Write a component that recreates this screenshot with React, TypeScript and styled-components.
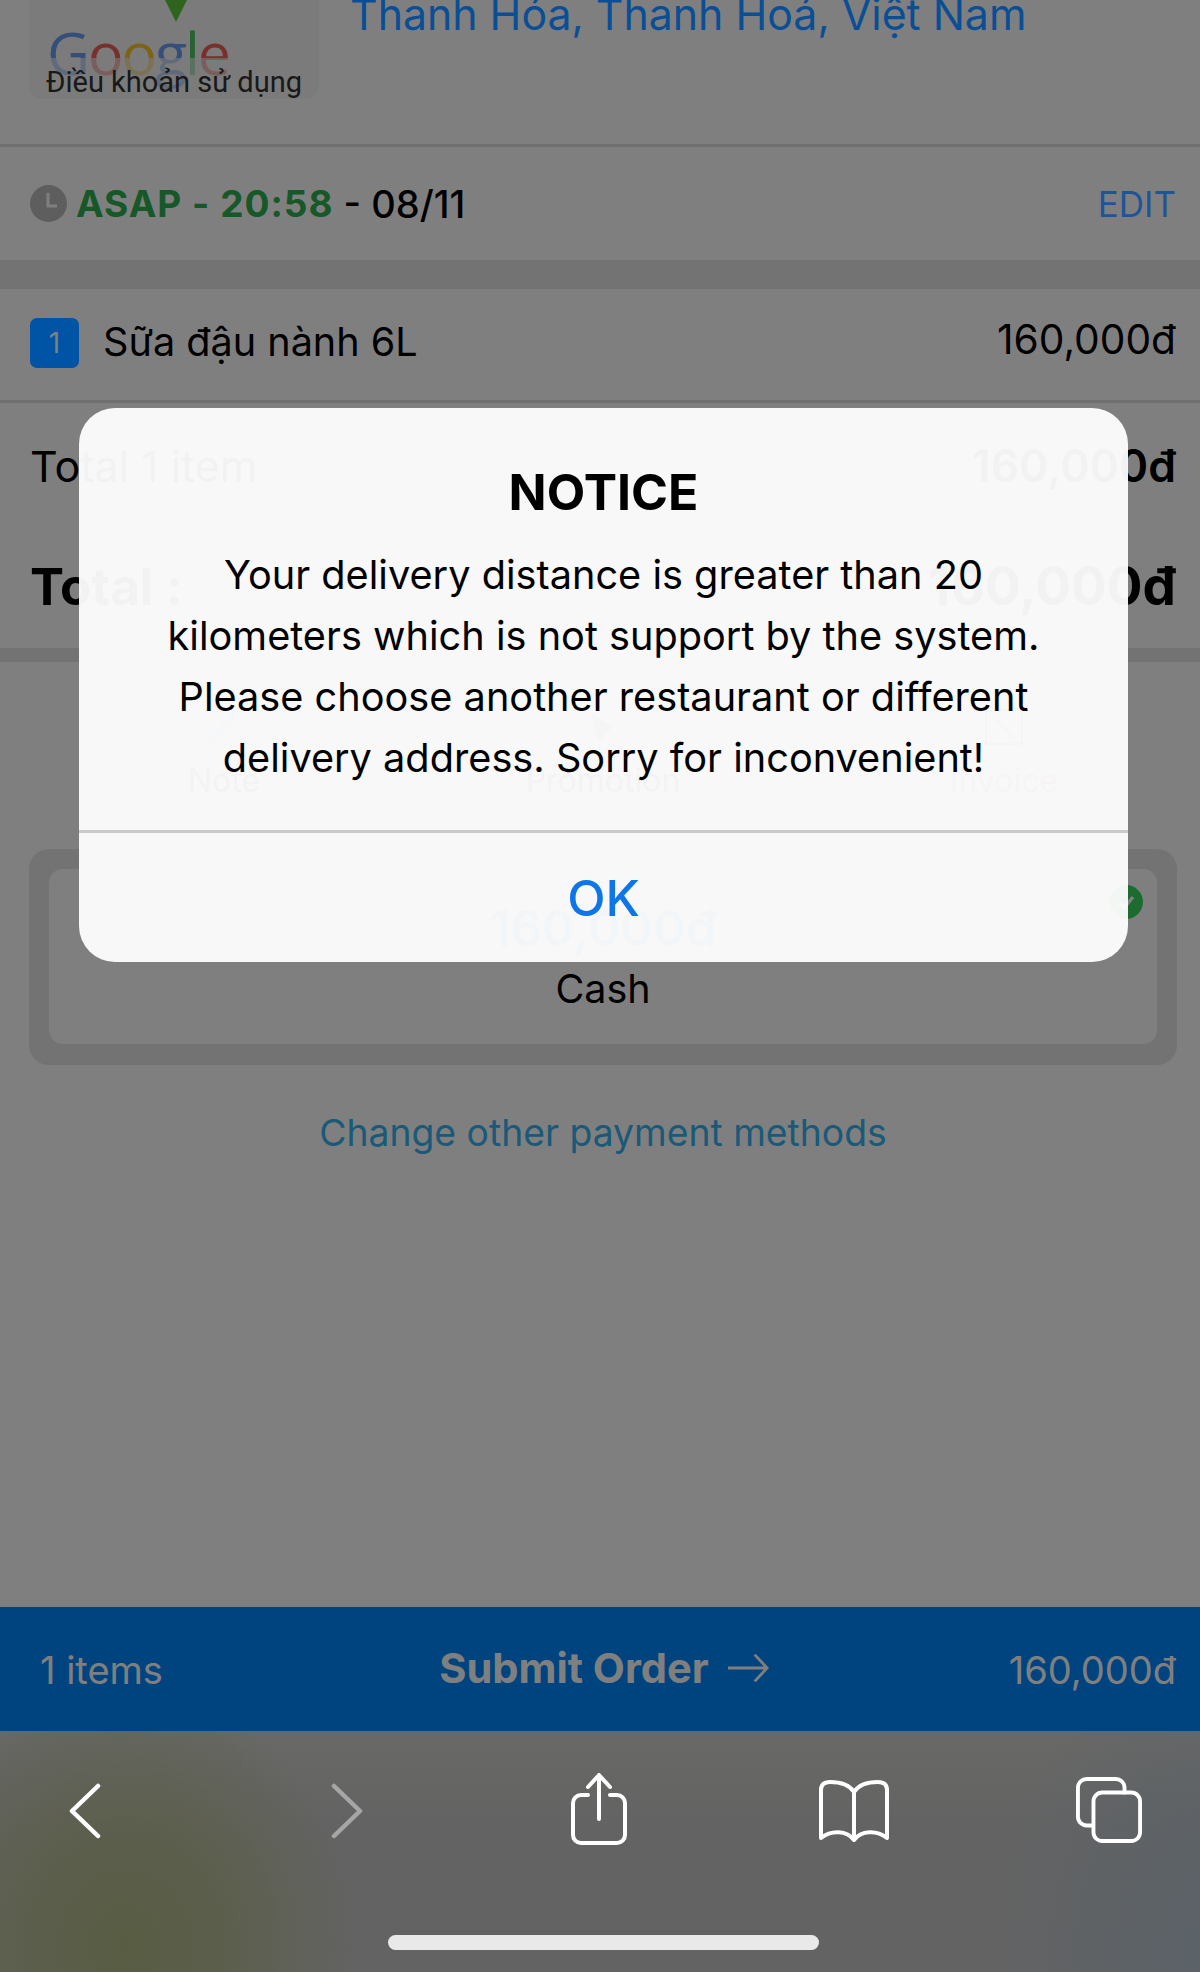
import React from "react";
import styled, { createGlobalStyle } from "styled-components";

const Global = createGlobalStyle`
  html, body { margin: 0; padding: 0; background: #fff; }
  body { font-family: Inter, "Noto Sans", "Liberation Sans", sans-serif; color: #000; }
  * { box-sizing: border-box; }
`;

const Screen = styled.div`
  width: 1200px;
  height: 1972px;
  display: flex;
  flex-direction: column;
  overflow: hidden;
`;
const Dimmed = styled.div`
  position: relative;
  height: 1731px;
  display: flex;
  flex-direction: column;
  background: #fff;
`;
const Scroll = styled.div`
  flex: 1;
  display: flex;
  flex-direction: column;
  min-height: 0;
`;
const MapRow = styled.div`
  height: 147px;
  flex: none;
  display: flex;
  gap: 31px;
  padding: 0 30px 0 29px;
  border-bottom: 3px solid #dedede;
  overflow: hidden;
`;
const MapCard = styled.div`
  position: relative;
  width: 290px;
  height: 99px;
  flex: none;
  background: #f6f6f6;
  border-radius: 0 0 14px 14px;
  overflow: hidden;
`;
const Pin = styled.svg`
  position: absolute;
  left: 135px;
  top: 0;
`;
const GoogleMark = styled.div`
  position: absolute;
  left: 18px;
  top: 18px;
  font-family: "Open Sans", sans-serif;
  font-size: 59px;
  line-height: 68px;
  letter-spacing: -2px;
  white-space: nowrap;
`;
const Letter = styled.span<{ $c: string }>`
  color: ${(p) => p.$c};
`;
const TermsStrip = styled.div`
  position: absolute;
  left: 0;
  right: 0;
  bottom: 0;
  height: 41px;
  padding: 7px 0 0 17px;
  background: rgba(246, 246, 246, 0.62);
  font-family: Roboto, sans-serif;
  font-size: 29px;
  line-height: 34px;
  color: #333;
  white-space: nowrap;
`;
const Address = styled.div`
  position: relative;
  z-index: 2;
  margin-top: -10px;
  font-size: 42.8px;
  line-height: 50px;
  color: #0a4f95;
  white-space: nowrap;
`;
const TimeRow = styled.div`
  height: 113px;
  flex: none;
  display: flex;
  align-items: center;
  padding: 0 24px 0 30px;
`;
const ClockIcon = styled.svg`
  flex: none;
  margin-right: 9px;
`;
const AsapText = styled.span`
  font-size: 37px;
  font-weight: 700;
  color: #2cb04e;
  letter-spacing: 1px;
`;
const DateText = styled.span`
  font-size: 38px;
  font-weight: 500;
  margin-left: 10px;
  flex: 1;
`;
const EditLink = styled.span`
  position: relative;
  z-index: 2;
  font-size: 35px;
  color: #1f5598;
`;
const Band = styled.div<{ $h: number }>`
  height: ${(p) => p.$h}px;
  flex: none;
  background: #e6e6e6;
`;
const ItemRow = styled.div`
  height: 114px;
  flex: none;
  display: flex;
  align-items: center;
  padding: 0 24px 0 30px;
  border-bottom: 3px solid #dedede;
`;
const QtyBadge = styled.span`
  position: relative;
  z-index: 2;
  width: 49px;
  height: 50px;
  flex: none;
  display: flex;
  align-items: center;
  justify-content: center;
  border-radius: 7px;
  background: #0054a6;
  color: #808080;
  font-size: 28px;
  margin: 0 24px 3px 0;
`;
const ItemName = styled.span`
  flex: 1;
  font-size: 39.6px;
  margin-bottom: 5px;
`;
const ItemPrice = styled.span`
  font-size: 40.7px;
  margin-bottom: 11px;
`;
const Totals = styled.div`
  height: 245px;
  flex: none;
  display: flex;
  flex-direction: column;
  padding: 38px 24px 0 30px;
  gap: 64px;
`;
const TotalLine = styled.div<{ $big?: boolean }>`
  display: flex;
  justify-content: space-between;
  align-items: center;
  height: ${(p) => (p.$big ? 62 : 50)}px;
  font-size: ${(p) => (p.$big ? 51 : 43)}px;
  font-weight: ${(p) => (p.$big ? 700 : 400)};
`;
const TotalValue = styled.span`
  font-size: 44.5px;
  font-weight: 600;
`;
const GrandValue = styled.span`
  font-size: 53px;
`;
const Actions = styled.div`
  height: 187px;
  flex: none;
  display: grid;
  grid-template-columns: 120px 638px 164px;
  padding: 46px 0 0 164px;
`;
const Action = styled.div`
  display: flex;
  flex-direction: column;
  align-items: center;
  gap: 15px;
  font-size: 32px;
  line-height: 40px;
`;
const ActionLabel = styled.span<{ $c: string }>`
  color: ${(p) => p.$c};
`;
const PayOuter = styled.div`
  height: 216px;
  flex: none;
  margin: 0 23px 0 29px;
  padding: 20px;
  background: #e6e6e6;
  border-radius: 20px;
`;
const PayInner = styled.div`
  position: relative;
  height: 175px;
  background: #fff;
  border-radius: 14px;
  display: flex;
  flex-direction: column;
  align-items: center;
  padding-top: 32px;
`;
const PayAmount = styled.div`
  font-size: 49.5px;
  line-height: 54px;
  font-weight: 600;
  color: #149eff;
`;
const PayName = styled.div`
  font-size: 39.5px;
  line-height: 46px;
  margin-top: 11px;
`;
const Check = styled.svg`
  position: absolute;
  left: 1060px;
  top: 16px;
`;
const ChangeLink = styled.div`
  margin-top: 44px;
  padding-left: 6px;
  text-align: center;
  font-size: 37.3px;
  line-height: 48px;
  color: #34b4f0;
`;
const BottomBar = styled.div`
  height: 124px;
  flex: none;
  display: grid;
  grid-template-columns: 1fr auto 1fr;
  align-items: center;
  padding: 2px 24px 0 40px;
  background: #0088ff;
  color: #fff;
  font-size: 38px;
`;
const BarPrice = styled.span`
  text-align: right;
`;
const SubmitGroup = styled.span`
  display: flex;
  align-items: center;
  gap: 18px;
  font-size: 41.6px;
  font-weight: 700;
  margin: -5px 8px 0 0;
`;
const Scrim = styled.div`
  position: absolute;
  inset: 0;
  z-index: 1;
  background: rgba(0, 0, 0, 0.5);
`;
const Dialog = styled.div`
  position: absolute;
  z-index: 3;
  left: 79px;
  top: 408px;
  width: 1049px;
  height: 554px;
  display: flex;
  flex-direction: column;
  background: rgba(255, 255, 255, 0.95);
  border-radius: 36px;
  overflow: hidden;
`;
const DialogBody = styled.div`
  height: 425px;
  flex: none;
  text-align: center;
  padding-top: 52px;
  border-bottom: 3px solid #c9c9c9;
`;
const DialogTitle = styled.div`
  font-size: 50px;
  line-height: 64px;
  font-weight: 700;
`;
const DialogText = styled.div`
  margin-top: 21px;
  font-size: 39.7px;
  line-height: 61px;
`;
const DialogButton = styled.div`
  flex: 1;
  display: flex;
  align-items: center;
  justify-content: center;
  font-size: 50px;
  font-weight: 500;
  color: #0f76e8;
`;
const Toolbar = styled.div`
  flex: 1;
  position: relative;
  padding: 42px 59px 0 69px;
  display: flex;
  align-items: flex-start;
  background:
    radial-gradient(ellipse 230px 260px at 125px 215px, #585c42 0%, rgba(90, 93, 68, 0.65) 50%, rgba(99, 99, 99, 0) 100%),
    radial-gradient(ellipse 240px 300px at 1230px 220px, #5a6269 0%, rgba(90, 98, 105, 0) 100%),
    linear-gradient(180deg, #686866 0%, #636363 40%);
`;
const ToolSlot = styled.div<{ $w: number; $top: number }>`
  width: ${(p) => p.$w}px;
  flex: none;
  margin-top: ${(p) => p.$top}px;
  line-height: 0;
`;
const HomeBar = styled.div`
  position: absolute;
  left: 388px;
  top: 204px;
  width: 431px;
  height: 15px;
  border-radius: 8px;
  background: #e9e9e9;
`;

const google: [string, string][] = [
  ["G", "#6a9df5"],
  ["o", "#f0605a"],
  ["o", "#f9c62b"],
  ["g", "#6a9df5"],
  ["l", "#4cc465"],
  ["e", "#f0605a"],
];

export default function App() {
  return (
    <>
      <Global />
      <Screen>
        <Dimmed>
          <Scroll>
            <MapRow>
              <MapCard>
                <Pin width="24" height="24" viewBox="0 0 24 24">
                  <path d="M1 0 H23 L12 22 Z" fill="#5cc83c" />
                </Pin>
                <GoogleMark>
                  {google.map(([l, c], i) => (
                    <Letter key={i} $c={c}>{l}</Letter>
                  ))}
                </GoogleMark>
                <TermsStrip>Điều khoản sử dụng</TermsStrip>
              </MapCard>
              <Address>Thanh Hóa, Thanh Hoá, Việt Nam</Address>
            </MapRow>
            <TimeRow>
              <ClockIcon width="37" height="37" viewBox="0 0 37 37">
                <circle cx="18.5" cy="18.5" r="18.5" fill="#bcbcbc" />
                <path d="M18 8 V21 H27" fill="none" stroke="#fff" strokeWidth="3" />
              </ClockIcon>
              <AsapText>ASAP - 20:58</AsapText>
              <DateText>- 08/11</DateText>
              <EditLink>EDIT</EditLink>
            </TimeRow>
            <Band $h={29} />
            <ItemRow>
              <QtyBadge>1</QtyBadge>
              <ItemName>Sữa đậu nành 6L</ItemName>
              <ItemPrice>160,000đ</ItemPrice>
            </ItemRow>
            <Totals>
              <TotalLine>
                <span>Total 1 item</span>
                <TotalValue>160,000đ</TotalValue>
              </TotalLine>
              <TotalLine $big>
                <span>Total :</span>
                <GrandValue>160,000đ</GrandValue>
              </TotalLine>
            </Totals>
            <Band $h={14} />
            <Actions>
              <Action>
                <svg width="40" height="38" viewBox="0 0 40 38">
                  <path d="M6 34 L32 4" stroke="#7cc8ff" strokeWidth="7" fill="none" />
                </svg>
                <ActionLabel $c="#333">Note</ActionLabel>
              </Action>
              <Action>
                <svg width="48" height="38" viewBox="0 0 48 38">
                  <path d="M12 6 L34 18 L20 34 Z" fill="#777" />
                </svg>
                <ActionLabel $c="#333">Promotion</ActionLabel>
              </Action>
              <Action>
                <svg width="42" height="38" viewBox="0 0 42 38">
                  <path d="M3 2 H39 V36 H3 Z M10 8 L32 30" fill="none" stroke="#888" strokeWidth="2" />
                </svg>
                <ActionLabel $c="#a04a55">Invoice</ActionLabel>
              </Action>
            </Actions>
            <PayOuter>
              <PayInner>
                <Check width="34" height="34" viewBox="0 0 34 34">
                  <circle cx="17" cy="17" r="17" fill="#38d65e" />
                  <path d="M10 18 L15 23 L24 12" fill="none" stroke="#fff" strokeWidth="3.5" />
                </Check>
                <PayAmount>160,000đ</PayAmount>
                <PayName>Cash</PayName>
              </PayInner>
            </PayOuter>
            <ChangeLink>Change other payment methods</ChangeLink>
          </Scroll>
          <BottomBar>
            <span>1 items</span>
            <SubmitGroup>
              Submit Order
              <svg width="42" height="32" viewBox="0 0 44 32">
                <path d="M1 16 H41 M29 2 L42 16 L29 30" fill="none" stroke="#fff" strokeWidth="3" />
              </svg>
            </SubmitGroup>
            <BarPrice>160,000đ</BarPrice>
          </BottomBar>
          <Scrim />
          <Dialog>
            <DialogBody>
              <DialogTitle>NOTICE</DialogTitle>
              <DialogText>
                Your delivery distance is greater than 20<br />
                kilometers which is not support by the system.<br />
                Please choose another restaurant or different<br />
                delivery address. Sorry for inconvenient!
              </DialogText>
            </DialogBody>
            <DialogButton>OK</DialogButton>
          </Dialog>
        </Dimmed>
        <Toolbar>
          <ToolSlot $w={262} $top={10}>
            <svg width="32" height="56" viewBox="0 0 32 56">
              <path d="M29 3 L3 28 L29 53" fill="none" stroke="#fff" strokeWidth="4.5" strokeLinecap="round" strokeLinejoin="round" />
            </svg>
          </ToolSlot>
          <ToolSlot $w={240} $top={10}>
            <svg width="32" height="56" viewBox="0 0 32 56">
              <path d="M3 3 L29 28 L3 53" fill="none" stroke="#a6a6a6" strokeWidth="4.5" strokeLinecap="round" strokeLinejoin="round" />
            </svg>
          </ToolSlot>
          <ToolSlot $w={248} $top={0}>
            <svg width="56" height="72" viewBox="0 0 56 72">
              <path d="M17 22 H10 A8 8 0 0 0 2 30 V62 A8 8 0 0 0 10 70 H46 A8 8 0 0 0 54 62 V30 A8 8 0 0 0 46 22 H39 M28 46 V3 M17 14 L28 2 L39 14" fill="none" stroke="#fff" strokeWidth="4" strokeLinecap="round" strokeLinejoin="round" />
            </svg>
          </ToolSlot>
          <ToolSlot $w={257} $top={7}>
            <svg width="70" height="62" viewBox="0 0 70 62">
              <path d="M35 12 C30 4 20 2 11 2 C5 2 2 5 2 10 V58 C12 50 28 50 35 60 C42 50 58 50 68 58 V10 C68 5 65 2 59 2 C50 2 40 4 35 12 Z M35 12 V60" fill="none" stroke="#fff" strokeWidth="4" strokeLinejoin="round" />
            </svg>
          </ToolSlot>
          <ToolSlot $w={66} $top={4}>
            <svg width="66" height="66" viewBox="0 0 68 68">
              <path d="M17 50 H11 A9 9 0 0 1 2 41 V11 A9 9 0 0 1 11 2 H41 A9 9 0 0 1 50 11 V16" fill="none" stroke="#fff" strokeWidth="4" strokeLinecap="round" />
              <rect x="18" y="16" width="48" height="50" rx="9" fill="none" stroke="#fff" strokeWidth="4" />
            </svg>
          </ToolSlot>
          <HomeBar />
        </Toolbar>
      </Screen>
    </>
  );
}
